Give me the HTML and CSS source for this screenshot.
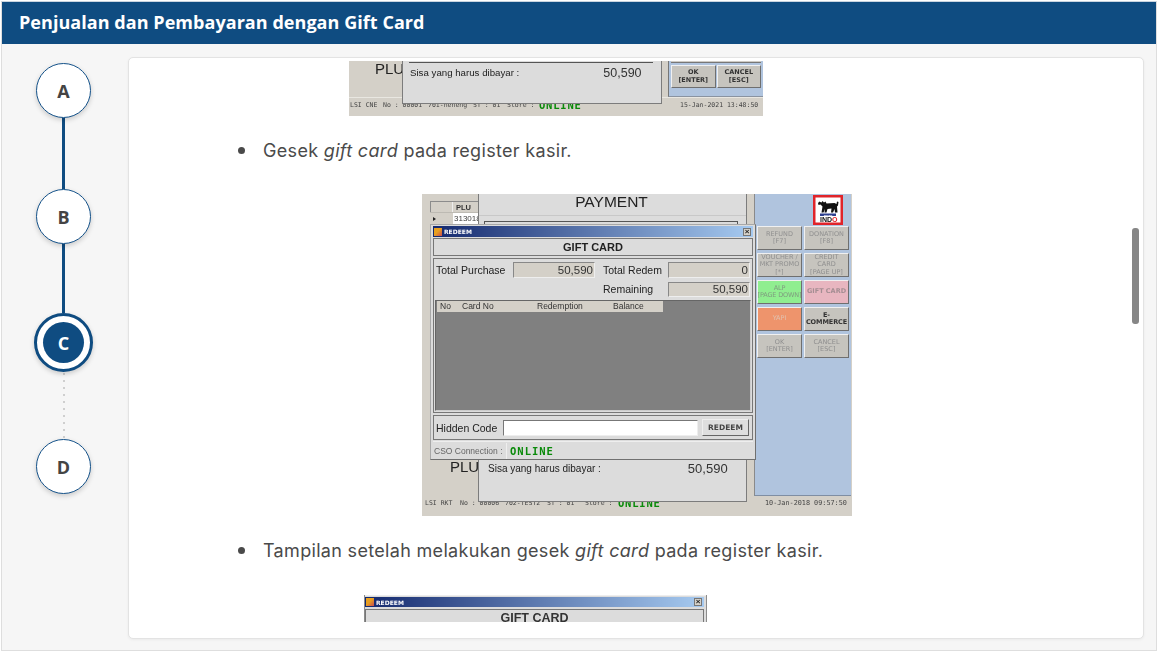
FILE: index.html
```html
<!DOCTYPE html>
<html lang="id">
<head>
<meta charset="utf-8">
<title>Penjualan dan Pembayaran dengan Gift Card</title>
<link rel="stylesheet" href="styles.css">
</head>
<body>
<div class="frame">
  <header class="topbar"><h1>Penjualan dan Pembayaran dengan Gift Card</h1></header>
  <div class="main">
    <nav class="stepper">
      <div class="step">A</div>
      <div class="link"></div>
      <div class="step">B</div>
      <div class="link link-short"></div>
      <div class="step step-active"><span>C</span></div>
      <div class="link-dotted"></div>
      <div class="step">D</div>
    </nav>
    <section class="card">
      <div class="scroller">
        <div class="shot shot-a">
          <div class="a-plu">PLU</div>
          <div class="a-blue">
            <div class="a-prev"></div>
            <div class="btn-row">
              <div class="wbtn wbtn-dark">OK<br>[ENTER]</div>
              <div class="wbtn wbtn-dark">CANCEL<br>[ESC]</div>
            </div>
          </div>
          <div class="status status-a">
            <span class="s1">LSI CNE</span><span class="s2">No : 00001</span><span class="s3">701-neneng</span><span class="s4">ST : 01</span><span class="s5">Store :</span><span class="online-big">ONLINE</span>
            <span class="s-date">15-Jan-2021 13:48:50</span>
          </div>
          <div class="a-pay">
            <div class="a-pay-line"></div>
            <div class="sisa-row"><span>Sisa yang harus dibayar :</span><span class="sisa-val">50,590</span></div>
          </div>
        </div>

        <ul class="list list-first"><li>Gesek <em>gift card</em> pada register kasir.</li></ul>

        <div class="shot shot-b">
          <div class="b-grid">
            <div class="b-grid-head"><span class="b-corner"></span><span class="b-plu">PLU</span></div>
            <div class="b-grid-row"><span class="b-arrow"></span><span class="b-num">313018</span></div>
          </div>
          <div class="status status-b">
            <span class="s1">LSI RKT</span><span class="s2">No : 00006</span><span class="s3">702-TEST2</span><span class="s4">ST : 01</span><span class="s5">Store :</span><span class="online-big">ONLINE</span>
            <span class="s-date">10-Jan-2018 09:57:50</span>
          </div>
          <div class="b-pay">
            <div class="b-pay-title">PAYMENT</div>
            <div class="b-pay-box"></div>
            <div class="sisa-row sisa-row-b"><span>Sisa yang harus dibayar :</span><span class="sisa-val">50,590</span></div>
          </div>
          <div class="b-plu2">PLU</div>
          <aside class="b-side">
            <svg class="logo" viewBox="0 0 30 30" width="30" height="30" role="img" aria-label="Super Indo">
              <rect x="0" y="0" width="30" height="30" fill="#e0242a"/>
              <rect x="2.5" y="2.5" width="25" height="25" fill="#fff"/>
              <path d="M6 6.5l2.5 1 1-1.500 1.500 1.500 1.500-1 1 2 8-.5 2 1 .5-2.500 1.500.5-.5 3.500-1 1 .5 6h-2.500l-.5-3.500-1.500 3.500h-2l.5-4-4 .5-1 3.500h-2l.5-3.500-1.500 3.500h-2l1-6-2-2-2 .5-.5-2 1-1z" fill="#111"/>
              <rect x="7" y="18.500" width="16" height="2.500" fill="#2c3f8f"/>
              <text class="logo-super" x="15" y="20.600" text-anchor="middle">SUPER</text>
              <text class="logo-indo" x="7" y="27">IND<tspan fill="#e0242a">O</tspan></text>
            </svg>
            <div class="btn-grid">
              <div class="wbtn">REFUND<br>[F7]</div>
              <div class="wbtn">DONATION<br>[F8]</div>
              <div class="wbtn">VOUCHER /<br>MKT PROMO<br>[*]</div>
              <div class="wbtn">CREDIT<br>CARD<br>[PAGE UP]</div>
              <div class="wbtn wbtn-green">ALP<br>[PAGE DOWN]</div>
              <div class="wbtn wbtn-pink">GIFT CARD</div>
              <div class="wbtn wbtn-orange">YAPI</div>
              <div class="wbtn wbtn-strong">E-<br>COMMERCE</div>
              <div class="wbtn">OK<br>[ENTER]</div>
              <div class="wbtn">CANCEL<br>[ESC]</div>
            </div>
          </aside>
          <div class="dialog">
            <div class="titlebar"><span class="tb-icon"></span><span class="tb-text">REDEEM</span><span class="tb-x">×</span></div>
            <div class="gc-title">GIFT CARD</div>
            <div class="gc-group">
              <div class="gc-fields">
                <span class="gc-label">Total Purchase</span><span class="gc-field">50,590</span>
                <span class="gc-label gc-label-c">Total Redem</span><span class="gc-field">0</span>
                <span></span><span></span>
                <span class="gc-label gc-label-c gc-label-r">Remaining</span><span class="gc-field gc-field-r">50,590</span>
              </div>
              <div class="gc-table">
                <div class="gc-thead"><span class="th1">No</span><span class="th2">Card No</span><span class="th3">Redemption</span><span class="th4">Balance</span></div>
              </div>
            </div>
            <div class="gc-hidden">
              <span class="gc-label">Hidden Code</span><span class="gc-input"></span><span class="gc-redeem">REDEEM</span>
            </div>
            <div class="gc-status"><span class="cso">CSO Connection :</span><span class="online-mid">ONLINE</span></div>
          </div>
        </div>

        <ul class="list list-second"><li>Tampilan setelah melakukan gesek <em>gift card</em> pada register kasir.</li></ul>

        <div class="shot shot-c">
          <div class="titlebar titlebar-c"><span class="tb-icon"></span><span class="tb-text">REDEEM</span><span class="tb-x">×</span></div>
          <div class="c-title">GIFT CARD</div>
        </div>
      </div>
      <div class="thumb"></div>
    </section>
  </div>
</div>
</body>
</html>
```
FILE: styles.css
```css
* { box-sizing: border-box; }
html, body { margin: 0; padding: 0; }
body { width: 1158px; height: 652px; background: #fff; overflow: hidden; font-family: "Inter", "Liberation Sans", sans-serif; color: #4a4a4a; }

.frame { margin: 1px 0 0 1px; width: 1156px; height: 650px; border: 1px solid #dedede; border-top-color: #c9d4df; background: #f6f6f6; display: flex; flex-direction: column; }
.topbar { height: 42px; background: #0f4c81; display: flex; align-items: center; padding: 0 0 3px 17px; flex: none; }
.topbar h1 { margin: 0; color: #fff; font: 700 18px "Open Sans", sans-serif; letter-spacing: .05px; }

.main { flex: 1; display: flex; min-height: 0; padding: 13px 11px 11px 0; }

.stepper { width: 126px; flex: none; display: flex; flex-direction: column; align-items: center; padding: 6px 3px 0 0; }
.step { width: 55px; height: 55px; flex: none; border-radius: 50%; background: #fff; border: 1px solid #14528a; box-shadow: 0 2px 5px rgba(0,0,0,.18); display: flex; align-items: center; justify-content: center; font: 700 18px "Open Sans", sans-serif; color: #444; position: relative; z-index: 1; }
.link { width: 3px; height: 71px; background: #0f4c81; flex: none; }
.link-short { height: 69px; }
.step-active { width: 59px; height: 59px; border: 3px solid #0f4c81; }
.step-active span { width: 41px; height: 41px; border-radius: 50%; background: #0f4c81; color: #fff; display: flex; align-items: center; justify-content: center; }
.link-dotted { height: 67px; width: 2px; flex: none; background: repeating-linear-gradient(#cfcfcf 0 2px, transparent 2px 7px); background-position: 0 1px; }

.card { position: relative; width: 1016px; flex: none; background: #fff; border: 1px solid #e3e3e3; border-radius: 5px; box-shadow: 0 1px 3px rgba(0,0,0,.05); padding: 3px 0 0; }
.scroller { height: 561px; overflow: hidden; display: flex; flex-direction: column; }
.thumb { position: absolute; left: 1003px; top: 170px; width: 7px; height: 96px; background: #868686; border-radius: 3px; }

.list { margin: 0; padding: 0 0 0 134px; font-size: 18px; line-height: 24px; letter-spacing: .32px; list-style: none; }
.list li { position: relative; }
.list li::before { content: ""; position: absolute; left: -25px; top: 8px; width: 7px; height: 7px; border-radius: 50%; background: #4a4a4a; }
.list em { font-style: italic; }
.list-first { margin: 23px 0 31px; }
.list-second { margin: 23px 0 32px; }

.shot { position: relative; flex: none; font-family: "Liberation Sans", sans-serif; color: #222; overflow: hidden; filter: blur(.35px); }

/* top screenshot */
.shot-a { margin-left: 220px; width: 414px; height: 55px; background: #d4d0c8; }
.a-plu { position: absolute; left: 26px; top: -1px; font-size: 15px; }
.a-blue { position: absolute; left: 319px; top: 0; width: 95px; height: 36px; background: #b0c4de; border-left: 1px solid #777; border-bottom: 1px solid #8a93a0; padding: 0 2px; }
.a-prev { height: 2px; margin-bottom: 2px; background: #cfccc6; border-bottom: 1px solid #777; }
.btn-row { display: flex; gap: 1px; }
.btn-row .wbtn { width: 45px; height: 23px; }
.a-pay { position: absolute; left: 53px; top: 0; width: 260px; height: 43px; background: #dcdcdc; border: 1px solid #7c7c7c; border-top: 0; padding: 0 5px; }
.a-pay-line { height: 2px; border-bottom: 1px solid #555; margin: 0 3px 0 1px; }
.sisa-row { display: flex; font-size: 9.700px; line-height: 12px; padding: 4px 0 0 2px; color: #222; }
.sisa-val { font-size: 12.500px; margin-left: 84px; color: #333; }

.status { position: absolute; left: 0; right: 0; font: 6.500px/8px "DejaVu Sans Mono", monospace; color: #444; white-space: nowrap; }
.status span { position: absolute; top: 3px; }
.status-a { top: 36px; height: 19px; border-top: 1px solid #e9e7e1; }
.status-a .s1 { left: 1px; }
.status-a .s2 { left: 34px; }
.status-a .s3 { left: 79px; }
.status-a .s4 { left: 124px; }
.status-a .s5 { left: 158px; }
.status-a .s-date { left: 331px; }
.status-a .online-big { left: 190px; top: 2px; }
.status-b { top: 302px; height: 20px; }
.status-b .s1 { left: 3px; }
.status-b .s2 { left: 38px; }
.status-b .s3 { left: 83px; }
.status-b .s4 { left: 125px; }
.status-b .s5 { left: 163px; }
.status-b .s-date { left: 343px; font-size: 6.800px; }
.status-b .online-big { left: 196px; top: 2px; }
.status .online-big { font: 700 10.500px/11px "DejaVu Sans Mono", monospace; color: #0a8a0a; letter-spacing: .8px; }

/* middle screenshot */
.shot-b { margin-left: 293px; width: 430px; height: 322px; background: #d4d0c8; }
.b-grid { position: absolute; left: 8px; top: 7px; width: 50px; font-size: 8px; }
.b-grid-head { display: flex; height: 11px; border-top: 1px solid #8c8c8c; border-left: 1px solid #8c8c8c; }
.b-corner { width: 22px; border-right: 1px solid #eee; }
.b-plu { padding: 1px 0 0 3px; line-height: 9px; color: #333; font-weight: 700; font-size: 7.500px; }
.b-grid-row { display: flex; height: 12px; border-top: 1px solid #bdbab3; }
.b-arrow { width: 23px; position: relative; }
.b-arrow::after { content: ""; position: absolute; left: 3px; top: 4px; border-left: 3px solid #222; border-top: 2px solid transparent; border-bottom: 2px solid transparent; }
.b-num { background: #fff; width: 26px; padding-left: 1px; line-height: 11px; color: #444; overflow: hidden; }
.b-pay { position: absolute; left: 56px; top: 0; width: 269px; height: 308px; background: #dcdcdc; border: 1px solid #7c7c7c; border-top: 0; }
.b-pay-title { text-align: center; font-size: 15.500px; line-height: 16px; height: 22px; padding-right: 2px; border-bottom: 1px solid #c8c8c8; color: #222; }
.b-pay-box { margin: 5px 0 0 5px; width: 254px; height: 30px; border: 1px solid #555; border-bottom: 0; }
.sisa-row-b { position: absolute; left: 9px; top: 269px; padding: 0; font-size: 10px; }
.sisa-row-b .sisa-val { margin-left: 87px; font-size: 13px; }
.b-plu2 { position: absolute; left: 28px; top: 264px; font-size: 15px; color: #222; }
.b-side { position: absolute; left: 332px; top: 0; width: 97px; height: 302px; background: #b0c4de; border-left: 1px solid #8a8a8a; border-bottom: 1px solid #7f8ea3; }
.logo { position: absolute; left: 58px; top: 1px; display: block; }
.logo-super { font: 700 2.500px "Liberation Sans", sans-serif; fill: #fff; }
.logo-indo { font: 700 7px "Liberation Sans", sans-serif; fill: #111; }
.btn-grid { position: absolute; left: 2px; top: 32px; display: grid; grid-template-columns: 45px 45px; grid-auto-rows: 24px; gap: 3px 2px; }
.wbtn { display: flex; align-items: center; justify-content: center; text-align: center; background: #c6c4be; border: 1px solid; border-color: #f0f0f0 #6f6f6f #6f6f6f #f0f0f0; font: 6.500px/7.500px "DejaVu Sans", sans-serif; color: #8f8f8f; white-space: nowrap; }
.wbtn-strong, .btn-row .wbtn { color: #333; font-weight: 700; }
.wbtn-strong { letter-spacing: -.1px; }
.wbtn-green { background: #90ee90; color: #7f9c7f; letter-spacing: -.15px; }
.wbtn-pink { background: #e8b6c0; color: #a58e93; font-weight: 700; }
.wbtn-orange { background: #ee946c; color: #e0c2b0; }

.dialog { position: absolute; left: 8px; top: 30px; width: 326px; height: 236px; background: #dcdcdc; border: 1px solid #a8a8a8; border-right-color: #707070; border-bottom-color: #707070; padding: 1px 2px; }
.titlebar { display: flex; align-items: center; height: 11px; background: linear-gradient(90deg, #14296e, #a6caf0); color: #fff; padding: 0 2px 0 1px; font: 700 6px "DejaVu Sans", sans-serif; }
.tb-icon { width: 8px; height: 8px; background: linear-gradient(135deg, #e8a020 45%, #c84a50); margin-right: 2px; flex: none; }
.tb-text { flex: 1; }
.tb-x { width: 8px; height: 8px; background: #d4d0c8; border: 1px solid #777; color: #222; font: 700 8px/6px "Liberation Sans", sans-serif; text-align: center; flex: none; }
.gc-title { margin-top: 1px; height: 18px; border: 1px solid #777; text-align: center; font: 700 11px/16px "Liberation Sans", sans-serif; color: #222; }
.gc-group { margin-top: 2px; height: 155px; border: 1px solid #777; padding: 3px 1px 1px 2px; }
.gc-fields { display: grid; grid-template-columns: 77px 82px 73px 82px; grid-template-rows: 16px 15px; row-gap: 4px; align-items: stretch; height: 36px; }
.gc-label { font-size: 10.500px; line-height: 16px; color: #222; }
.gc-label-c { padding-left: 8px; }
.gc-label-r { line-height: 14px; }
.gc-field { background: #d4d0c8; border: 1px solid; border-color: #888 #eee #eee #888; text-align: right; padding-right: 1px; font-size: 11.500px; line-height: 14px; color: #333; }
.gc-field-r { line-height: 12px; }
.gc-table { position: relative; height: 111px; margin: 2px 0 0 -1px; background: #808080; border: 1px solid; border-color: #666 #ccc #ccc #666; }
.gc-thead { position: relative; width: 226px; height: 11px; margin-left: 1px; background: #d4d0c8; font: 8.500px/11px "Liberation Sans", sans-serif; color: #333; }
.gc-thead span { position: absolute; top: 0; }
.th1 { left: 3px; }
.th2 { left: 25px; }
.th3 { left: 100px; }
.th4 { left: 176px; }
.gc-hidden { margin-top: 2px; height: 25px; border: 1px solid #777; display: flex; align-items: center; padding-left: 2px; }
.gc-hidden .gc-label { width: 67px; flex: none; }
.gc-input { width: 195px; height: 16px; background: #fff; border: 1px solid; border-color: #777 #eee #eee #777; flex: none; }
.gc-redeem { margin-left: 4px; width: 47px; height: 17px; background: #dedede; border: 1px solid; border-color: #eee #666 #666 #eee; font: 700 7.500px/15px "DejaVu Sans", sans-serif; color: #444; text-align: center; flex: none; }
.gc-status { margin-top: 1px; height: 18px; display: flex; align-items: center; border-top: 1px solid #eee; }
.cso { font-size: 8.500px; line-height: 16px; color: #666; width: 74px; flex: none; padding-left: 1px; border-right: 1px solid #eee; white-space: nowrap; }
.online-mid { margin-left: 3px; font: 700 10.500px "DejaVu Sans Mono", monospace; color: #0a8a0a; letter-spacing: 1px; }

/* bottom screenshot */
.shot-c { margin-left: 235px; width: 343px; height: 27px; background: #dcdcdc; border-left: 1px solid #8c8c8c; border-right: 1px solid #8c8c8c; padding: 2px 2px 0 0; box-shadow: inset 0 1px 0 #eee; }
.titlebar-c { height: 10px; }
.c-title { margin-top: 2px; height: 20px; border: 1px solid #777; border-bottom: 0; text-align: center; font: 700 12.500px/16px "Liberation Sans", sans-serif; color: #333; }
```
